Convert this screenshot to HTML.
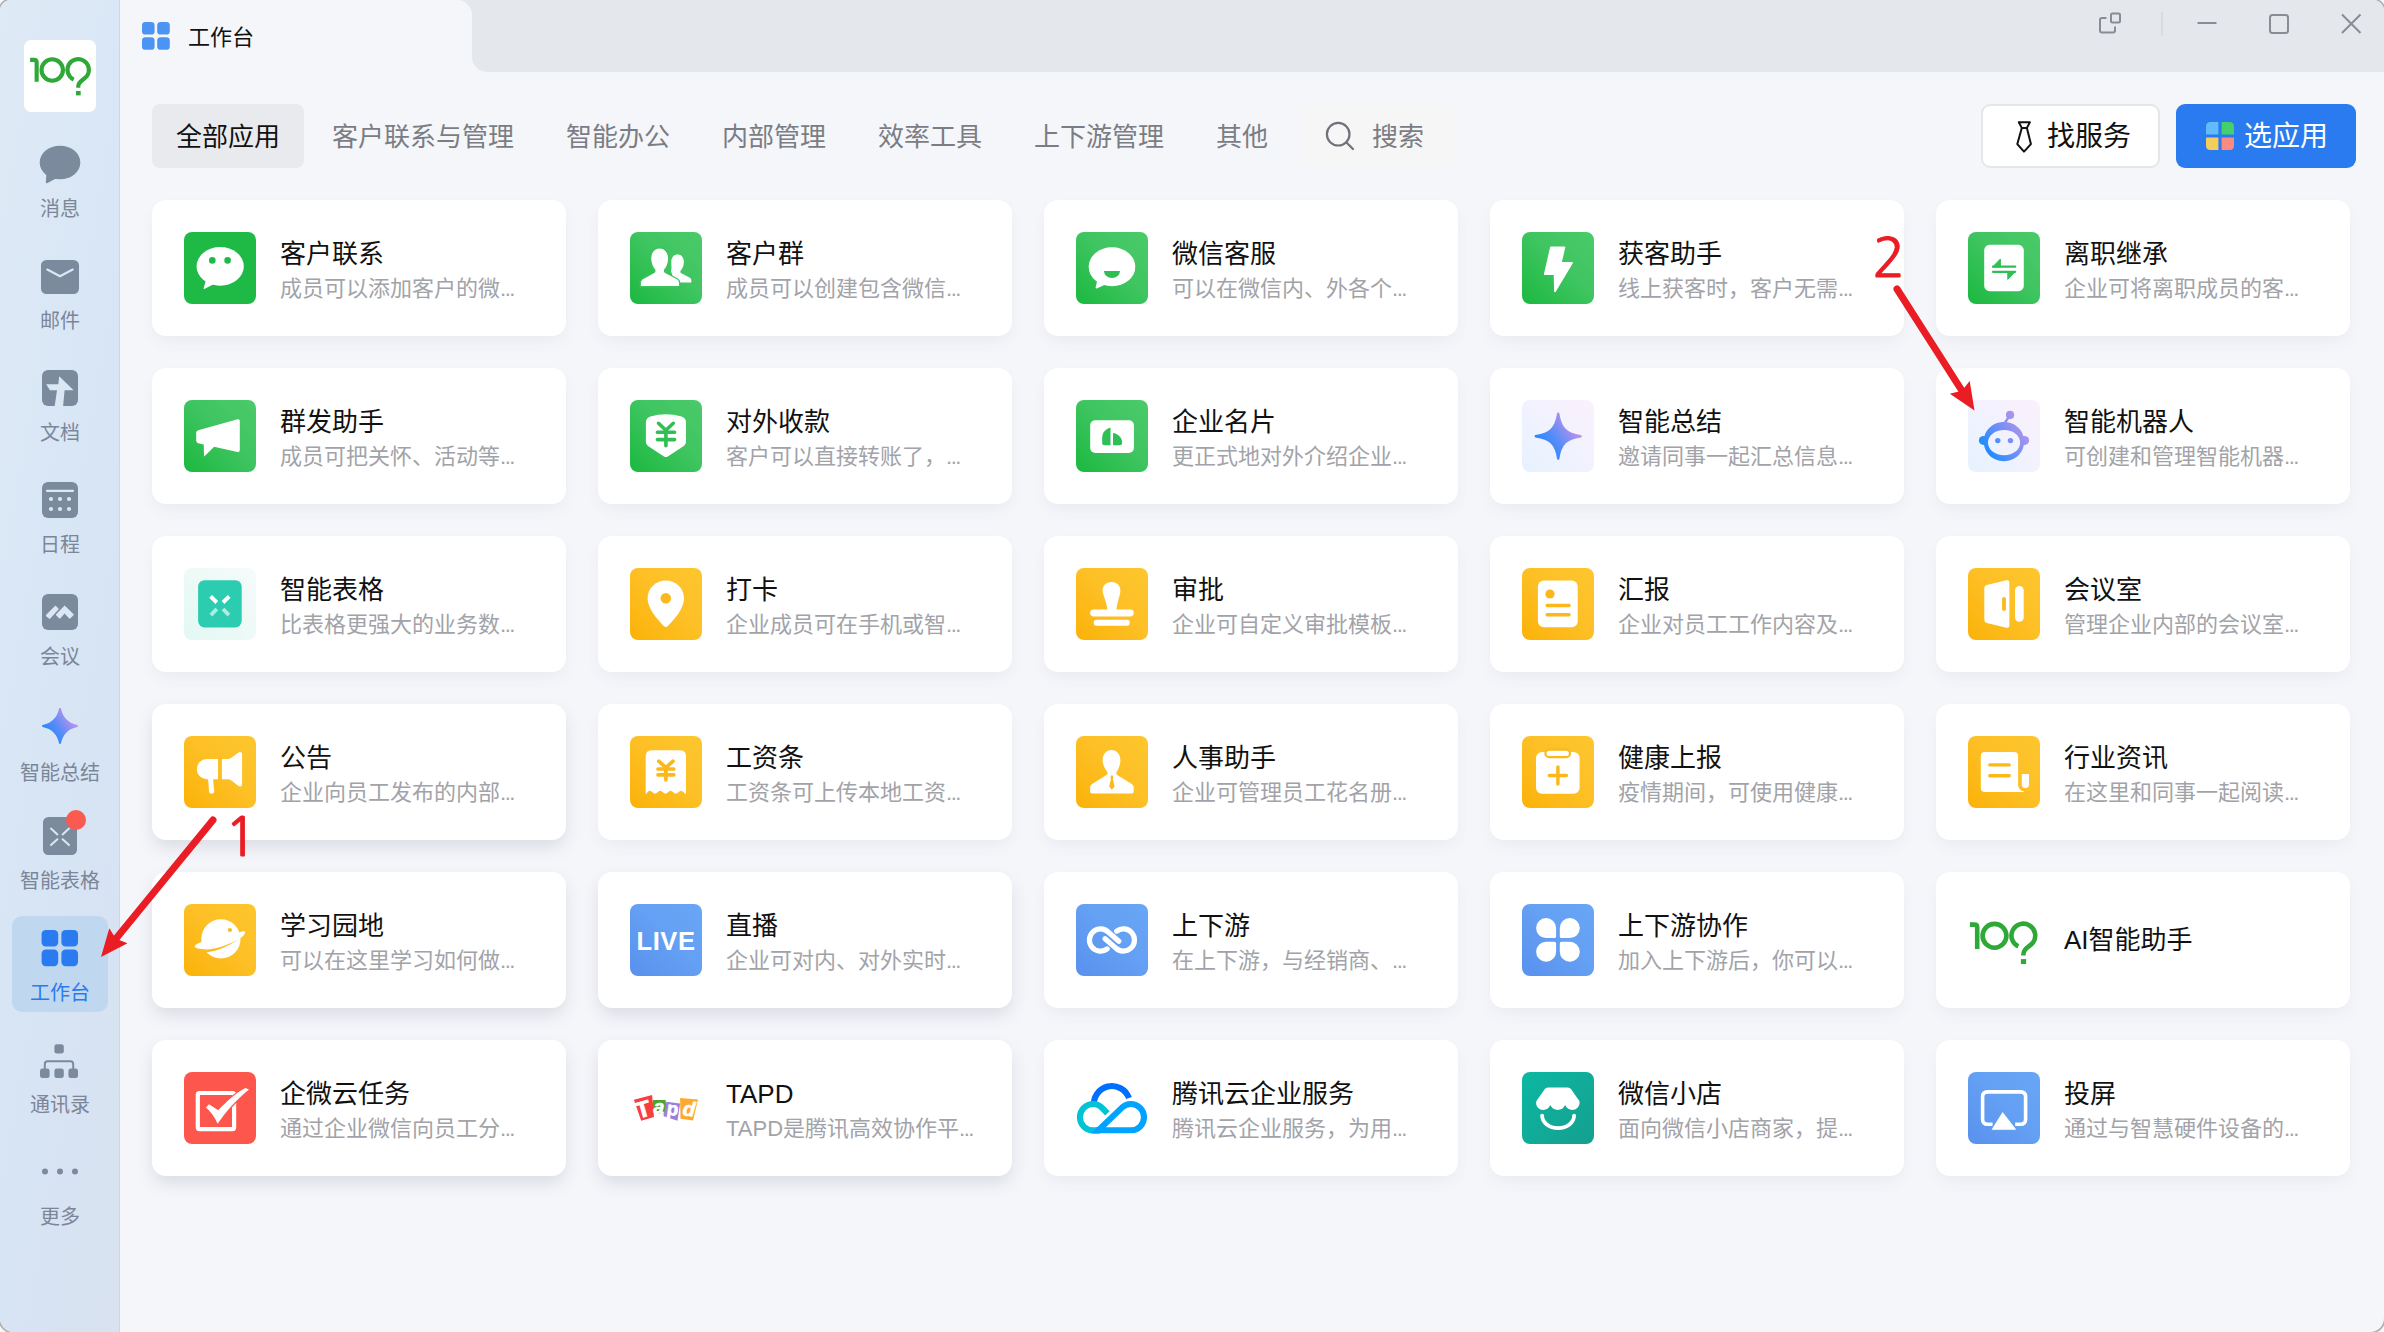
<!DOCTYPE html>
<html lang="zh-CN">
<head>
<meta charset="utf-8">
<title>工作台</title>
<style>
*{box-sizing:border-box;margin:0;padding:0}
html,body{width:2384px;height:1332px;overflow:hidden;background:#f7f7f7;font-family:"Liberation Sans","Noto Sans CJK SC",sans-serif;}
#win{position:absolute;left:0;top:0;width:2384px;height:1332px;border-radius:11px 11px 14px 14px;overflow:hidden;background:#f5f6fa;box-shadow:0 0 0 1.8px #b0b0b0;}
#side{position:absolute;left:0;top:0;width:120px;height:1332px;background:linear-gradient(100deg,#dfeaf6 0%,#d7e5f5 50%,#d8e2f0 100%);border-right:1px solid #cdd6e2;}
#logo{position:absolute;left:24px;top:40px;width:72px;height:72px;border-radius:7px;background:#fff;}
.si{position:absolute;left:0;width:120px;text-align:center;color:#7c8698;font-size:20px;line-height:26px;}
.si svg{position:absolute;left:50%;}
.si span{position:absolute;left:0;width:120px;text-align:center;}
#act{position:absolute;left:12px;top:916px;width:96px;height:96px;border-radius:10px;background:#c0d7f0;}
#tbar0{position:absolute;left:440px;top:0;width:80px;height:40px;background:#e4e7ec;}
#tbar{position:absolute;left:472px;top:0;width:1912px;height:72px;background:#e4e7ec;border-radius:0 0 0 15px;}
#ttab{position:absolute;left:120px;top:0;width:352px;height:72px;background:#f5f6fa;border-radius:0 15px 0 0;}
#ttl{position:absolute;left:188px;top:20px;font-size:22px;line-height:36px;color:#111;}
.tab{position:absolute;top:104px;height:64px;line-height:67px;font-size:26px;color:#7a7d83;padding:0 24px;border-radius:8px;white-space:nowrap;}
.tab.on{background:#e9eaee;color:#111;}
#search{position:absolute;left:1300px;top:105px;width:153px;height:62px;border-radius:8px;background:#f6f6f7;}
#search span{position:absolute;left:72px;top:0;line-height:64px;font-size:26px;color:#7a7d83;}
#btn1{position:absolute;left:1981px;top:104px;width:179px;height:64px;border-radius:9px;background:#fff;border:2px solid #e6e6e6;}
#btn1 span{position:absolute;left:64px;top:0;line-height:62px;font-size:28px;color:#111;}
#btn2{position:absolute;left:2176px;top:104px;width:180px;height:64px;border-radius:9px;background:#2a7bef;}
#btn2 span{position:absolute;left:68px;top:0;line-height:66px;font-size:28px;color:#fff;}
.card{position:absolute;width:414px;height:136px;border-radius:14px;background:#fff;box-shadow:0 7px 16px -3px rgba(70,80,110,.075);}
.card.hv{box-shadow:0 8px 18px -2px rgba(50,60,90,.15);}
.card .ic{position:absolute;left:32px;top:32px;width:72px;height:72px;}
.card .ic svg{display:block;width:72px;height:72px;}
.card .tt{position:absolute;left:128px;top:35px;font-size:26px;line-height:38px;color:#111;white-space:nowrap;}
.card .ds{position:absolute;left:128px;top:72px;font-size:22px;line-height:34px;color:#a2a3a8;white-space:nowrap;}
.card.nod .tt{top:49px;}
.el{letter-spacing:-1.5px;}
#anno{position:absolute;left:0;top:0;width:2384px;height:1332px;pointer-events:none;}
</style>
</head>
<body>
<div id="win">
<div id="side">
<div id="logo"><svg width="72" height="72" viewBox="0 0 72 72" style="display:block"><g transform="translate(4.375 1.37) scale(0.9)"><g fill="none" stroke="#2ea836" stroke-width="4.6"><path d="M1.9 20.6 H6.4 Q9.2 20.6 9.2 23.4 V44.9"/><circle cx="26.5" cy="31.8" r="11.9"/><path d="M50.35 42.4 A11.9 11.9 0 1 1 65.1 38.4 C62 42.6 55.45 44.4 55.45 49.8 V51.6"/></g><rect x="52.9" y="55.1" width="5.2" height="4.9" fill="#2ea836"/></g></svg></div>
<div id="act"></div>
<div class="si" style="top:140px"><svg style="left:0;top:0;margin-left:0;overflow:visible" width="120" height="60" viewBox="0 0 120 60"><ellipse cx="60" cy="22.5" rx="20.3" ry="16.8" fill="#7c8a9e"/><path d="M46.5 33 L45.8 42.6 Q46 43.6 47 43.2 L57 38 Z" fill="#7c8a9e"/></svg><span style="top:56px">消息</span></div>
<div class="si" style="top:252px"><svg style="left:0;top:0;margin-left:0;overflow:visible" width="120" height="60" viewBox="0 0 120 60"><rect x="41" y="8" width="38" height="34" rx="5.5" fill="#7c8a9e"/><path d="M47.3 17.6 L60 24.2 L72.7 17.6" fill="none" stroke="#dbe7f4" stroke-width="2.2" stroke-linecap="round" stroke-linejoin="round"/></svg><span style="top:56px">邮件</span></div>
<div class="si" style="top:364px"><svg style="left:0;top:0;margin-left:0;overflow:visible" width="120" height="60" viewBox="0 0 120 60"><rect x="42" y="6" width="36" height="36" rx="6" fill="#7c8a9e"/><path d="M59.2 12.3 L73.6 26.3 L64.6 26.3 L63.1 42 L54.7 42 L57 26.3 L50 26.3 L46.2 20.2 L58.3 20.2 Z" fill="#dbe7f4"/></svg><span style="top:56px">文档</span></div>
<div class="si" style="top:476px"><svg style="left:0;top:0;margin-left:0;overflow:visible" width="120" height="60" viewBox="0 0 120 60"><rect x="42" y="6" width="36" height="36" rx="6" fill="#7c8a9e"/><rect x="46" y="13.8" width="28" height="2.2" rx="1" fill="#dbe7f4"/><circle cx="51" cy="23" r="2.1" fill="#dbe7f4"/><circle cx="60" cy="23" r="2.1" fill="#dbe7f4"/><circle cx="69" cy="23" r="2.1" fill="#dbe7f4"/><circle cx="51" cy="33" r="2.1" fill="#dbe7f4"/><circle cx="60" cy="33" r="2.1" fill="#dbe7f4"/><circle cx="69" cy="33" r="2.1" fill="#dbe7f4"/></svg><span style="top:56px">日程</span></div>
<div class="si" style="top:588px"><svg style="left:0;top:0;margin-left:0;overflow:visible" width="120" height="60" viewBox="0 0 120 60"><rect x="42" y="6" width="36" height="36" rx="6" fill="#7c8a9e"/><path d="M55.5 17.5 L46.2 26.8 Q45.6 27.6 46.4 28.4 L48.9 30.6 Q49.6 31.2 50.3 30.4 L58.9 21 Z" fill="#dbe7f4"/><path d="M64.6 17.5 L73.4 26.1 Q74 26.9 73.3 27.6 L70.5 30.3 Q69.7 30.9 69 30.2 L64.6 25.5 L60.4 30.2 Q59.8 30.8 59 30.2 L55.7 26.8 Z" fill="#dbe7f4"/></svg><span style="top:56px">会议</span></div>
<div class="si" style="top:704px"><svg style="left:0;top:0;margin-left:0;overflow:visible" width="120" height="60" viewBox="0 0 120 60"><defs><linearGradient id="sg1" x1="0.1" y1="0.8" x2="0.9" y2="0.25"><stop offset="0" stop-color="#1f86ff"/><stop offset="0.45" stop-color="#5a8cf8"/><stop offset="1" stop-color="#c793ee"/></linearGradient></defs><path d="M60 5 C62.04 14.52 67.48 19.96 77 22 C67.48 24.04 62.04 29.48 60 39 C57.96 29.48 52.519999999999996 24.04 43 22 C52.519999999999996 19.96 57.96 14.52 60 5 Z" fill="url(#sg1)" stroke="url(#sg1)" stroke-width="2" stroke-linejoin="round"/></svg><span style="top:56px">智能总结</span></div>
<div class="si" style="top:812px"><svg style="left:0;top:0;margin-left:0;overflow:visible" width="120" height="60" viewBox="0 0 120 60"><rect x="43" y="5" width="34" height="38" rx="5.5" fill="#7c8a9e"/><path d="M51 16.6 L57.4 22.4 M69 16.6 L62.6 22.4 M51 33 L57.4 27.2 M69 33 L62.6 27.2" stroke="#dbe7f4" stroke-width="2" stroke-linecap="round"/><circle cx="76" cy="8" r="10" fill="#fa5b50"/></svg><span style="top:56px">智能表格</span></div>
<div class="si" style="top:924px;color:#2a7bef"><svg style="left:0;top:0;margin-left:0;overflow:visible" width="120" height="60" viewBox="0 0 120 60"><rect x="41.6" y="6" width="16.6" height="16.6" rx="4.2" fill="#2a7bef"/><rect x="41.6" y="25.6" width="16.6" height="16.6" rx="4.2" fill="#2a7bef"/><rect x="61.4" y="6" width="16.6" height="16.6" rx="4.2" fill="#2a7bef"/><rect x="61.4" y="25.6" width="16.6" height="16.6" rx="4.2" fill="#2a7bef"/></svg><span style="top:56px">工作台</span></div>
<div class="si" style="top:1036px"><svg style="left:0;top:0;margin-left:0;overflow:visible" width="120" height="60" viewBox="0 0 120 60"><rect x="54.4" y="8.2" width="9.4" height="9.4" rx="2.4" fill="#7c8a9e"/><rect x="40" y="32.5" width="9.6" height="9.6" rx="2.4" fill="#7c8a9e"/><rect x="54.4" y="32.5" width="9.4" height="9.6" rx="2.4" fill="#7c8a9e"/><rect x="68.4" y="32.5" width="9.6" height="9.6" rx="2.4" fill="#7c8a9e"/><path d="M44.8 33 L44.8 28 Q44.8 25.2 47.6 25.2 L70.4 25.2 Q73.2 25.2 73.2 28 L73.2 33" fill="none" stroke="#7c8a9e" stroke-width="2"/></svg><span style="top:56px">通讯录</span></div>
<div class="si" style="top:1148px"><svg style="left:0;top:0;margin-left:0;overflow:visible" width="120" height="60" viewBox="0 0 120 60"><circle cx="45" cy="23.5" r="3" fill="#7c8a9e"/><circle cx="60" cy="23.5" r="3" fill="#7c8a9e"/><circle cx="75" cy="23.5" r="3" fill="#7c8a9e"/></svg><span style="top:56px">更多</span></div>
</div>
<div id="tbar0"></div>
<div id="tbar"></div>
<div id="ttab"></div>
<svg style="position:absolute;left:142px;top:22px" width="28" height="28" viewBox="0 0 28 28"><rect x="0" y="0" width="12.6" height="12.6" rx="3.4" fill="#4c94f4"/><rect x="0" y="15.2" width="12.6" height="12.6" rx="3.4" fill="#4c94f4"/><rect x="15.2" y="0" width="12.6" height="12.6" rx="3.4" fill="#4c94f4"/><rect x="15.2" y="15.2" width="12.6" height="12.6" rx="3.4" fill="#4c94f4"/></svg>
<div id="ttl">工作台</div>
<svg style="position:absolute;left:2090px;top:0" width="294" height="72" viewBox="2090 0 294 72" fill="none" stroke="#898c92" stroke-width="2"><rect x="2111" y="13.5" width="9" height="9" rx="1.5"/><path d="M2106.5 18 L2102 18 Q2100 18 2100 20 L2100 30.5 Q2100 32.5 2102 32.5 L2113 32.5 Q2115 32.5 2115 30.5 L2115 26.5"/><path d="M2162 12 L2162 35.5" stroke="#d6d7da" stroke-width="1.6"/><path d="M2197.5 23 L2216.5 23"/><rect x="2270" y="15" width="18" height="18" rx="2.5"/><path d="M2342 14.5 L2360.5 33 M2360.5 14.5 L2342 33"/></svg>
<div class="tab on" style="left:152px">全部应用</div>
<div class="tab" style="left:308px">客户联系与管理</div>
<div class="tab" style="left:542px">智能办公</div>
<div class="tab" style="left:698px">内部管理</div>
<div class="tab" style="left:854px">效率工具</div>
<div class="tab" style="left:1010px">上下游管理</div>
<div class="tab" style="left:1192px">其他</div>
<div id="search"><svg style="position:absolute;left:23px;top:14px" width="34" height="34" viewBox="0 0 34 34" fill="none" stroke="#6f7278" stroke-width="2.2" stroke-linecap="round"><circle cx="15.2" cy="15.2" r="11.3"/><path d="M23.5 23.5 L30 30"/></svg><span>搜索</span></div>
<div id="btn1"><svg style="position:absolute;left:32px;top:12.5px" width="18" height="34" viewBox="0 0 18 34" fill="none" stroke="#111" stroke-width="2" stroke-linejoin="round"><path d="M3.8 3.2 L14.9 3.2 L11.9 8.9 L6.8 8.9 Z"/><path d="M6.8 8.9 L2.3 25.1 L9 32.6 L15.9 25.1 L11.9 8.9"/></svg><span>找服务</span></div>
<div id="btn2"><svg style="position:absolute;left:30px;top:18px" width="28" height="28" viewBox="0 0 28 28"><path d="M4.5 0 H12.4 V12.4 H0 V4.5 Q0 0 4.5 0 Z" fill="#62bbfd"/><path d="M15.6 0 H23.5 Q28 0 28 4.5 V12.4 H15.6 Z" fill="#45d06a"/><path d="M0 15.6 H12.4 V28 H4.5 Q0 28 0 23.5 Z" fill="#f5cd5c"/><path d="M15.6 15.6 H28 V23.5 Q28 28 23.5 28 H15.6 Z" fill="#fb8a83"/></svg><span>选应用</span></div>
<div class="card" style="left:152px;top:200px"><div class="ic"><svg viewBox="0 0 72 72"><rect width="72" height="72" rx="8" fill="#1fba46"/><ellipse cx="36.2" cy="34.4" rx="23.6" ry="19.4" fill="#fff"/><path d="M22 48 L19.6 56.4 Q19.8 57.2 20.8 56.8 L31 51.5 Z" fill="#fff"/><circle cx="28.3" cy="28.4" r="3.3" fill="#1fba46"/><circle cx="43.6" cy="28.4" r="3.3" fill="#1fba46"/></svg></div><div class="tt">客户联系</div><div class="ds">成员可以添加客户的微<span class="el">...</span></div></div>
<div class="card" style="left:598px;top:200px"><div class="ic"><svg viewBox="0 0 72 72"><defs><linearGradient id="g1" x1="0" y1="1" x2="1" y2="0"><stop offset="0" stop-color="#1bb83f"/><stop offset="0.55" stop-color="#3fc561"/><stop offset="1" stop-color="#4bca69"/></linearGradient></defs><rect width="72" height="72" rx="8" fill="url(#g1)"/><g transform="translate(0.9 1.1)"><path d="M46.7 21.4 C50.8 21.4 53 24.8 53 29 C53 32.6 51.6 35.6 50 37.2 C49.2 38.2 49.3 39.6 50.4 40.2 L58.6 44.4 C60 45.2 60.4 46.2 60.4 47.4 L60.4 49.4 L44 49.4 L40 38 C41 36 40.4 33 40.4 29 C40.4 24.8 42.6 21.4 46.7 21.4 Z" fill="#fff"/><path d="M28.7 15.3 C34 15.3 37.2 19.8 37.2 25.4 C37.2 30 35.4 34 33.6 36 C32.6 37.2 32.8 39.2 34.2 40 L45.6 46 C47.6 47 48.2 48.6 48.2 50.4 L48.2 53 L10 53 L10 50.4 C10 48.6 10.6 47 12.6 46 L23.4 40 C24.8 39.2 25 37.2 24 36 C22.2 34 20.4 30 20.4 25.4 C20.4 19.8 23.4 15.3 28.7 15.3 Z" fill="#fff" stroke="#3cc35e" stroke-width="2.6" paint-order="stroke"/></g></svg></div><div class="tt">客户群</div><div class="ds">成员可以创建包含微信<span class="el">...</span></div></div>
<div class="card" style="left:1044px;top:200px"><div class="ic"><svg viewBox="0 0 72 72"><defs><linearGradient id="g2" x1="0" y1="1" x2="1" y2="0"><stop offset="0" stop-color="#1bb83f"/><stop offset="0.55" stop-color="#3fc561"/><stop offset="1" stop-color="#4bca69"/></linearGradient></defs><rect width="72" height="72" rx="8" fill="url(#g2)"/><ellipse cx="36" cy="34.8" rx="23.3" ry="19.5" fill="#fff"/><path d="M21.4 47.6 L19.6 55.8 Q19.8 56.8 20.8 56.4 L31.4 51.6 Z" fill="#fff"/><path d="M28 39.1 L44 39.1 A8 7 0 0 1 28 39.1 Z" fill="#2dbf54"/></svg></div><div class="tt">微信客服</div><div class="ds">可以在微信内、外各个<span class="el">...</span></div></div>
<div class="card" style="left:1490px;top:200px"><div class="ic"><svg viewBox="0 0 72 72"><defs><linearGradient id="g3" x1="0" y1="1" x2="1" y2="0"><stop offset="0" stop-color="#1bb83f"/><stop offset="0.55" stop-color="#3fc561"/><stop offset="1" stop-color="#4bca69"/></linearGradient></defs><rect width="72" height="72" rx="8" fill="url(#g3)"/><path d="M29 15.3 L42.4 15.3 L38.8 30.8 L50 30.8 L33 59.2 L32.6 42.2 L22.8 42.2 Z" fill="#fff" stroke="#fff" stroke-width="1.8" stroke-linejoin="round"/></svg></div><div class="tt">获客助手</div><div class="ds">线上获客时，客户无需<span class="el">...</span></div></div>
<div class="card" style="left:1936px;top:200px"><div class="ic"><svg viewBox="0 0 72 72"><defs><linearGradient id="g4" x1="0" y1="1" x2="1" y2="0"><stop offset="0" stop-color="#1bb83f"/><stop offset="0.55" stop-color="#3fc561"/><stop offset="1" stop-color="#4bca69"/></linearGradient></defs><rect width="72" height="72" rx="8" fill="url(#g4)"/><rect x="16.2" y="12.8" width="39.6" height="46.4" rx="5.5" fill="#fff"/><path d="M25 34.7 L47.2 34.7 M25 39.8 L47.2 39.8" stroke="#2fbf55" stroke-width="2.2" stroke-linecap="round"/><path d="M24.6 35 L32.4 27 L32.4 35 Z M47.6 39.5 L39.8 47.4 L39.8 39.5 Z" fill="#2fbf55" stroke="#2fbf55" stroke-width="1" stroke-linejoin="round"/></svg></div><div class="tt">离职继承</div><div class="ds">企业可将离职成员的客<span class="el">...</span></div></div>
<div class="card" style="left:152px;top:368px"><div class="ic"><svg viewBox="0 0 72 72"><defs><linearGradient id="g5" x1="0" y1="1" x2="1" y2="0"><stop offset="0" stop-color="#1bb83f"/><stop offset="0.55" stop-color="#3fc561"/><stop offset="1" stop-color="#4bca69"/></linearGradient></defs><rect width="72" height="72" rx="8" fill="url(#g5)"/><path d="M14.2 30.2 L53.6 19.2 Q55.8 18.8 55.8 21 L55.8 50 Q55.8 52.4 53.6 52 L14.2 43.2 Q12.2 42.6 12.2 40.6 L12.2 32.6 Q12.2 30.8 14.2 30.2 Z" fill="#fff"/><path d="M19.7 42.6 L20 56 Q20.2 56.7 20.8 56.1 L30.4 46.6 Z" fill="#fff"/></svg></div><div class="tt">群发助手</div><div class="ds">成员可把关怀、活动等<span class="el">...</span></div></div>
<div class="card" style="left:598px;top:368px"><div class="ic"><svg viewBox="0 0 72 72"><defs><linearGradient id="g6" x1="0" y1="1" x2="1" y2="0"><stop offset="0" stop-color="#1bb83f"/><stop offset="0.55" stop-color="#3fc561"/><stop offset="1" stop-color="#4bca69"/></linearGradient></defs><rect width="72" height="72" rx="8" fill="url(#g6)"/><path d="M20.4 16.4 Q35.9 12 51.6 16.4 Q56 17.8 56 22.4 L56 42 Q56 44.6 53.8 46 L37.8 56.4 Q35.9 57.6 34 56.4 L18 46 Q15.9 44.6 15.9 42 L15.9 22.4 Q15.9 17.8 20.4 16.4 Z" fill="#fff"/><path d="M28.5 23.3 L35.9 30.2 L43.3 23.3 M35.9 30.2 L35.9 45.8 M27.4 32.2 L44.6 32.2 M27.4 39.6 L44.6 39.6" fill="none" stroke="#2fbf55" stroke-width="3.6" stroke-linecap="round" stroke-linejoin="round"/></svg></div><div class="tt">对外收款</div><div class="ds">客户可以直接转账了，<span class="el">...</span></div></div>
<div class="card" style="left:1044px;top:368px"><div class="ic"><svg viewBox="0 0 72 72"><defs><linearGradient id="g7" x1="0" y1="1" x2="1" y2="0"><stop offset="0" stop-color="#1bb83f"/><stop offset="0.55" stop-color="#3fc561"/><stop offset="1" stop-color="#4bca69"/></linearGradient></defs><rect width="72" height="72" rx="8" fill="url(#g7)"/><rect x="14.2" y="20.2" width="43.7" height="32.8" rx="5" fill="#fff"/><path d="M26.2 43.3 L26.2 37 Q26.6 30.6 33.4 27.7 Q34.5 27.4 34.5 28.6 L34.5 45.3 L28.2 45.3 Q26.2 45.3 26.2 43.3 Z" fill="#2fbf55"/><path d="M37 33.6 Q37 32.6 38 33 Q45.6 35.6 46 41.6 L46 43.3 Q46 45.3 44 45.3 L37 45.3 Z" fill="#2fbf55"/></svg></div><div class="tt">企业名片</div><div class="ds">更正式地对外介绍企业<span class="el">...</span></div></div>
<div class="card" style="left:1490px;top:368px"><div class="ic"><svg viewBox="0 0 72 72"><defs><linearGradient id="g8" x1="0" y1="1" x2="1" y2="0"><stop offset="0" stop-color="#e6f2ff"/><stop offset="0.55" stop-color="#f2f2fe"/><stop offset="1" stop-color="#fbf1fd"/></linearGradient></defs><rect width="72" height="72" rx="8" fill="url(#g8)"/><defs><linearGradient id="zs" x1="0.1" y1="0.8" x2="0.9" y2="0.25"><stop offset="0" stop-color="#1f86ff"/><stop offset="0.45" stop-color="#5a8cf8"/><stop offset="1" stop-color="#c793ee"/></linearGradient></defs><path d="M36.2 13.800000000000004 C38.3504 28.315200000000004 44.0848 34.049600000000005 58.6 36.2 C44.0848 38.3504 38.3504 44.0848 36.2 58.6 C34.049600000000005 44.0848 28.315200000000004 38.3504 13.800000000000004 36.2 C28.315200000000004 34.049600000000005 34.049600000000005 28.315200000000004 36.2 13.800000000000004 Z" fill="url(#zs)" stroke="url(#zs)" stroke-width="2.4" stroke-linejoin="round"/></svg></div><div class="tt">智能总结</div><div class="ds">邀请同事一起汇总信息<span class="el">...</span></div></div>
<div class="card" style="left:1936px;top:368px"><div class="ic"><svg viewBox="0 0 72 72"><defs><linearGradient id="g9" x1="0" y1="1" x2="1" y2="0"><stop offset="0" stop-color="#e6f2ff"/><stop offset="0.55" stop-color="#f2f2fe"/><stop offset="1" stop-color="#fbf1fd"/></linearGradient></defs><rect width="72" height="72" rx="8" fill="url(#g9)"/><defs><linearGradient id="rb" gradientUnits="userSpaceOnUse" x1="14" y1="52" x2="58" y2="22"><stop offset="0" stop-color="#0f8dff"/><stop offset="0.5" stop-color="#6e8ff7"/><stop offset="1" stop-color="#bf95e8"/></linearGradient></defs><g fill="url(#rb)"><path fill-rule="evenodd" d="M36 22.1 C47.6 22.1 56.1 30.6 56.1 41.6 C56.1 52.6 47.6 61.2 36 61.2 C24.4 61.2 15.8 52.6 15.8 41.6 C15.8 30.6 24.4 22.1 36 22.1 Z M36.1 29.9 C27 29.9 20 35.4 20 42.5 C20 49.6 27 55.2 36.1 55.2 C45.2 55.2 52.2 49.6 52.2 42.5 C52.2 35.4 45.2 29.9 36.1 29.9 Z"/><circle cx="15.4" cy="40.4" r="4.5"/><circle cx="56.6" cy="40.4" r="4.5"/><circle cx="29.8" cy="40.6" r="2.7"/><circle cx="42.5" cy="40.6" r="2.7"/><circle cx="42.1" cy="14.9" r="4.1"/><path d="M34.8 23.4 L37.4 24 L42.4 17 L40.4 15.4 Z"/></g></svg></div><div class="tt">智能机器人</div><div class="ds">可创建和管理智能机器<span class="el">...</span></div></div>
<div class="card" style="left:152px;top:536px"><div class="ic"><svg viewBox="0 0 72 72"><defs><linearGradient id="g10" x1="0" y1="1" x2="1" y2="0"><stop offset="0" stop-color="#e2f8f3"/><stop offset="0.55" stop-color="#eefaf7"/><stop offset="1" stop-color="#f6fbfb"/></linearGradient></defs><rect width="72" height="72" rx="8" fill="url(#g10)"/><rect x="14.1" y="12.2" width="43.6" height="47.2" rx="6.4" fill="#2bccb0"/><path d="M26.6 28.3 L32.8 34.5 M45.2 28.3 L39 34.5" stroke="#fff" stroke-width="3.9" stroke-linecap="butt"/><path d="M26.9 47.2 L32.8 41 M44.9 47.2 L39 41" stroke="#fff" stroke-opacity="0.62" stroke-width="3.9" stroke-linecap="butt"/></svg></div><div class="tt">智能表格</div><div class="ds">比表格更强大的业务数<span class="el">...</span></div></div>
<div class="card" style="left:598px;top:536px"><div class="ic"><svg viewBox="0 0 72 72"><defs><linearGradient id="g11" x1="0" y1="1" x2="1" y2="0"><stop offset="0" stop-color="#fbb209"/><stop offset="0.55" stop-color="#fdc026"/><stop offset="1" stop-color="#fec62e"/></linearGradient></defs><rect width="72" height="72" rx="8" fill="url(#g11)"/><path d="M35.8 12.6 C46 12.6 54 20.4 54 30.4 C54 40 45 50.6 37.6 58.2 Q35.8 59.8 34 58.2 C26.6 50.6 17.6 40 17.6 30.4 C17.6 20.4 25.6 12.6 35.8 12.6 Z" fill="#fff"/><circle cx="35.8" cy="30.2" r="5.2" fill="#fcb81a"/></svg></div><div class="tt">打卡</div><div class="ds">企业成员可在手机或智<span class="el">...</span></div></div>
<div class="card" style="left:1044px;top:536px"><div class="ic"><svg viewBox="0 0 72 72"><defs><linearGradient id="g12" x1="0" y1="1" x2="1" y2="0"><stop offset="0" stop-color="#fbb209"/><stop offset="0.55" stop-color="#fdc026"/><stop offset="1" stop-color="#fec62e"/></linearGradient></defs><rect width="72" height="72" rx="8" fill="url(#g12)"/><path d="M35.5 14.1 C41 14.1 44.6 18 44.4 23 C44.2 27.4 41.4 33 40.4 42 L31.5 42 C30.4 33 27 27.4 26.6 23 C26.4 18 30 14.1 35.5 14.1 Z" fill="#fff"/><rect x="14.1" y="41.5" width="43.6" height="6.9" rx="3.4" fill="#fff"/><rect x="17.7" y="51.8" width="36" height="5.9" rx="2.6" fill="#fff"/></svg></div><div class="tt">审批</div><div class="ds">企业可自定义审批模板<span class="el">...</span></div></div>
<div class="card" style="left:1490px;top:536px"><div class="ic"><svg viewBox="0 0 72 72"><defs><linearGradient id="g13" x1="0" y1="1" x2="1" y2="0"><stop offset="0" stop-color="#fbb209"/><stop offset="0.55" stop-color="#fdc026"/><stop offset="1" stop-color="#fec62e"/></linearGradient></defs><rect width="72" height="72" rx="8" fill="url(#g13)"/><rect x="15.9" y="12.5" width="39.8" height="46.7" rx="6" fill="#fff"/><circle cx="28" cy="26" r="4.6" fill="#fcb81a"/><path d="M25.2 37.5 L47 37.5 M25.2 46.7 L47 46.7" stroke="#fcb81a" stroke-width="3.5" stroke-linecap="round"/></svg></div><div class="tt">汇报</div><div class="ds">企业对员工工作内容及<span class="el">...</span></div></div>
<div class="card" style="left:1936px;top:536px"><div class="ic"><svg viewBox="0 0 72 72"><defs><linearGradient id="g14" x1="0" y1="1" x2="1" y2="0"><stop offset="0" stop-color="#fbb209"/><stop offset="0.55" stop-color="#fdc026"/><stop offset="1" stop-color="#fec62e"/></linearGradient></defs><rect width="72" height="72" rx="8" fill="url(#g14)"/><path d="M18.8 17 L38.4 12.3 Q41.4 11.6 41.4 14.6 L41.4 57.4 Q41.4 60.4 38.4 59.7 L18.8 55 Q16.3 54.4 16.3 51.8 L16.3 20.2 Q16.3 17.6 18.8 17 Z" fill="#fff"/><rect x="34.1" y="29" width="3.8" height="14" rx="1.9" fill="#fcb81a"/><rect x="47" y="18.1" width="8.7" height="35.6" rx="4.3" fill="#fff"/></svg></div><div class="tt">会议室</div><div class="ds">管理企业内部的会议室<span class="el">...</span></div></div>
<div class="card hv" style="left:152px;top:704px"><div class="ic"><svg viewBox="0 0 72 72"><defs><linearGradient id="g15" x1="0" y1="1" x2="1" y2="0"><stop offset="0" stop-color="#fbb209"/><stop offset="0.55" stop-color="#fdc026"/><stop offset="1" stop-color="#fec62e"/></linearGradient></defs><rect width="72" height="72" rx="8" fill="url(#g15)"/><path d="M22.8 23.1 L34 23.1 L34 43.2 L22.8 43.2 A10.05 10.05 0 0 1 22.8 23.1 Z" fill="#fff"/><path d="M24 42.6 L29 42.6 L30.2 55 Q30.2 57.7 27.6 57.7 Q25.2 57.7 25 55 Z" fill="#fff"/><path d="M37.9 23.1 L43.5 23.1 Q45.6 23.1 47.4 21.8 L54.2 16.8 Q58.1 14.6 58.1 18.6 L58.1 48 Q58.1 52 54.2 49.8 L47.4 44.6 Q45.6 43.2 43.5 43.2 L37.9 43.2 Z" fill="#fff"/></svg></div><div class="tt">公告</div><div class="ds">企业向员工发布的内部<span class="el">...</span></div></div>
<div class="card" style="left:598px;top:704px"><div class="ic"><svg viewBox="0 0 72 72"><defs><linearGradient id="g16" x1="0" y1="1" x2="1" y2="0"><stop offset="0" stop-color="#fbb209"/><stop offset="0.55" stop-color="#fdc026"/><stop offset="1" stop-color="#fec62e"/></linearGradient></defs><rect width="72" height="72" rx="8" fill="url(#g16)"/><path d="M21.7 14.2 L50 14.2 Q56 14.2 56 20.2 L56 58.2 L52.6 55.4 Q51 54.2 49.4 55.4 L47.4 57 Q45.8 58.2 44.2 57 L42.2 55.4 Q40.6 54.2 39 55.4 L37 57 Q35.4 58.2 33.8 57 L31.8 55.4 Q30.2 54.2 28.6 55.4 L26.6 57 Q25 58.2 23.4 57 L21.4 55.4 Q19.8 54.2 18.2 55.4 L15.7 58.2 L15.7 20.2 Q15.7 14.2 21.7 14.2 Z" fill="#fff"/><path d="M28.8 25.2 L35.9 31.6 L43 25.2 M35.9 31.6 L35.9 43.8 M28 33 L43.8 33 M28 38.8 L43.8 38.8" fill="none" stroke="#fcb81a" stroke-width="3.7" stroke-linecap="round" stroke-linejoin="round"/></svg></div><div class="tt">工资条</div><div class="ds">工资条可上传本地工资<span class="el">...</span></div></div>
<div class="card" style="left:1044px;top:704px"><div class="ic"><svg viewBox="0 0 72 72"><defs><linearGradient id="g17" x1="0" y1="1" x2="1" y2="0"><stop offset="0" stop-color="#fbb209"/><stop offset="0.55" stop-color="#fdc026"/><stop offset="1" stop-color="#fec62e"/></linearGradient></defs><rect width="72" height="72" rx="8" fill="url(#g17)"/><path d="M35.5 14.1 C40.8 14.1 44.4 18.6 44.4 24.4 C44.4 29 42.4 33 40.8 35.6 C40 37 40.2 38.4 41.6 39.2 L55 47.6 C57 48.8 57.7 50 57.7 52 L57.7 55.6 Q57.7 57.6 55.7 57.6 L16.1 57.6 Q14.1 57.6 14.1 55.6 L14.1 52 C14.1 50 14.8 48.8 16.8 47.6 L30.2 39.2 C31.6 38.4 31.8 37 31 35.6 C29.4 33 26.6 29 26.6 24.4 C26.6 18.6 30.2 14.1 35.5 14.1 Z" fill="#fff"/><path d="M35.9 38.8 L37.4 41 L36.8 43 L38.6 50.4 L35.9 53.7 L33.2 50.4 L35 43 L34.4 41 Z" fill="#fcb81a"/></svg></div><div class="tt">人事助手</div><div class="ds">企业可管理员工花名册<span class="el">...</span></div></div>
<div class="card" style="left:1490px;top:704px"><div class="ic"><svg viewBox="0 0 72 72"><defs><linearGradient id="g18" x1="0" y1="1" x2="1" y2="0"><stop offset="0" stop-color="#fbb209"/><stop offset="0.55" stop-color="#fdc026"/><stop offset="1" stop-color="#fec62e"/></linearGradient></defs><rect width="72" height="72" rx="8" fill="url(#g18)"/><rect x="14" y="15.9" width="43.6" height="41.8" rx="6" fill="#fff"/><rect x="23.4" y="13.6" width="24.6" height="7.6" rx="3.8" fill="#fff" stroke="#fcb81a" stroke-width="2.2"/><path d="M27.4 39.4 L44.4 39.4 M35.9 30.9 L35.9 47.9" stroke="#fcb81a" stroke-width="3.5" stroke-linecap="round"/></svg></div><div class="tt">健康上报</div><div class="ds">疫情期间，可使用健康<span class="el">...</span></div></div>
<div class="card" style="left:1936px;top:704px"><div class="ic"><svg viewBox="0 0 72 72"><defs><linearGradient id="g19" x1="0" y1="1" x2="1" y2="0"><stop offset="0" stop-color="#fbb209"/><stop offset="0.55" stop-color="#fdc026"/><stop offset="1" stop-color="#fec62e"/></linearGradient></defs><rect width="72" height="72" rx="8" fill="url(#g19)"/><path d="M16.8 15.9 H46.1 Q50.1 15.9 50.1 19.9 V48.6 Q50.3 54.6 56.2 55.5 L55.6 56 H16.8 Q12.8 56 12.8 52 V19.9 Q12.8 15.9 16.8 15.9 Z" fill="#fff"/><path d="M53.8 37.9 H61 V48.5 Q61 52.1 57.4 52.1 Q53.8 52.1 53.8 48.5 Z" fill="#fff"/><path d="M21.8 28.9 L41.2 28.9 M21.8 39.7 L41.2 39.7" stroke="#fcb81a" stroke-width="3.4" stroke-linecap="round"/></svg></div><div class="tt">行业资讯</div><div class="ds">在这里和同事一起阅读<span class="el">...</span></div></div>
<div class="card hv" style="left:152px;top:872px"><div class="ic"><svg viewBox="0 0 72 72"><defs><linearGradient id="g20" x1="0" y1="1" x2="1" y2="0"><stop offset="0" stop-color="#fbb209"/><stop offset="0.55" stop-color="#fdc026"/><stop offset="1" stop-color="#fec62e"/></linearGradient></defs><rect width="72" height="72" rx="8" fill="url(#g20)"/><circle cx="36.9" cy="34.9" r="19.6" fill="#fff"/><path d="M18.4 37.6 C13.4 39.4 10.2 41.4 10.8 42.8 C12 45.8 24 45.7 31.6 44.2 C40 42.4 50 37.8 55.4 34.9 C58.8 32.6 61.8 29.6 61.1 28 C60.6 26.8 58.4 27.4 55.4 28.6 L36 34 Z" fill="#fff"/><path d="M14.6 37.6 L17 39.4 L18.6 43 L14 42 Z" fill="#fcba1c" opacity="0"/><path d="M15.4 45.3 C21 45.8 26 45.4 31.6 44.2 C40 42.4 50 37.8 55.4 34.9 C52 37.2 49 38.8 44.9 41 C42 42.6 37 45 31.6 46.5 C30 47 27 47.6 23.1 48.2 L18 48.4 Z" fill="#fcba1c"/><circle cx="45.9" cy="26" r="2.1" fill="#fcba1c"/></svg></div><div class="tt">学习园地</div><div class="ds">可以在这里学习如何做<span class="el">...</span></div></div>
<div class="card hv" style="left:598px;top:872px"><div class="ic"><svg viewBox="0 0 72 72"><defs><linearGradient id="g21" x1="0" y1="1" x2="1" y2="0"><stop offset="0" stop-color="#5991ee"/><stop offset="0.55" stop-color="#64a0f3"/><stop offset="1" stop-color="#6aa6f6"/></linearGradient></defs><rect width="72" height="72" rx="8" fill="url(#g21)"/><text x="36" y="45.6" text-anchor="middle" font-family="Liberation Sans, sans-serif" font-weight="bold" font-size="25.5" letter-spacing="0.6" fill="#fff">LIVE</text></svg></div><div class="tt">直播</div><div class="ds">企业可对内、对外实时<span class="el">...</span></div></div>
<div class="card" style="left:1044px;top:872px"><div class="ic"><svg viewBox="0 0 72 72"><defs><linearGradient id="g22" x1="0" y1="1" x2="1" y2="0"><stop offset="0" stop-color="#5991ee"/><stop offset="0.55" stop-color="#64a0f3"/><stop offset="1" stop-color="#6aa6f6"/></linearGradient></defs><rect width="72" height="72" rx="8" fill="url(#g22)"/><g fill="none" stroke="#fff" stroke-width="5.2" stroke-linecap="round"><path d="M42.8 37.2 L32.35 28.15 A11.1 11.1 0 1 0 31.2 44.9"/><path d="M29.1 34.8 L39.55 43.85 A11.1 11.1 0 1 0 40.7 27.1"/></g></svg></div><div class="tt">上下游</div><div class="ds">在上下游，与经销商、<span class="el">...</span></div></div>
<div class="card" style="left:1490px;top:872px"><div class="ic"><svg viewBox="0 0 72 72"><defs><linearGradient id="g23" x1="0" y1="1" x2="1" y2="0"><stop offset="0" stop-color="#5991ee"/><stop offset="0.55" stop-color="#64a0f3"/><stop offset="1" stop-color="#6aa6f6"/></linearGradient></defs><rect width="72" height="72" rx="8" fill="url(#g23)"/><path d="M24.1 14.1 h0 a10 10 0 0 1 10 10 v8.4 a1.6 1.6 0 0 1 -1.6 1.6 h-8.399999999999999 a10 10 0 0 1 -10 -10 v-0 a10 10 0 0 1 10 -10 Z" fill="#fff"/><path d="M47.8 14.1 h0 a10 10 0 0 1 10 10 v0 a10 10 0 0 1 -10 10 h-8.4 a1.6 1.6 0 0 1 -1.6 -1.6 v-8.399999999999999 a10 10 0 0 1 10 -10 Z" fill="#fff"/><path d="M24.1 37.8 h8.4 a1.6 1.6 0 0 1 1.6 1.6 v8.399999999999999 a10 10 0 0 1 -10 10 h-0 a10 10 0 0 1 -10 -10 v-0 a10 10 0 0 1 10 -10 Z" fill="#fff"/><path d="M39.4 37.8 h8.399999999999999 a10 10 0 0 1 10 10 v0 a10 10 0 0 1 -10 10 h-0 a10 10 0 0 1 -10 -10 v-8.4 a1.6 1.6 0 0 1 1.6 -1.6 Z" fill="#fff"/></svg></div><div class="tt">上下游协作</div><div class="ds">加入上下游后，你可以<span class="el">...</span></div></div>
<div class="card nod" style="left:1936px;top:872px"><div class="ic"><svg viewBox="0 0 72 72"><g fill="none" stroke="#2ea836" stroke-width="4.6"><path d="M1.9 20.6 H6.4 Q9.2 20.6 9.2 23.4 V44.9"/><circle cx="26.5" cy="31.8" r="11.9"/><path d="M50.35 42.4 A11.9 11.9 0 1 1 65.1 38.4 C62 42.6 55.45 44.4 55.45 49.8 V51.6"/></g><rect x="52.9" y="55.1" width="5.2" height="4.9" fill="#2ea836"/></svg></div><div class="tt">AI智能助手</div></div>
<div class="card hv" style="left:152px;top:1040px"><div class="ic"><svg viewBox="0 0 72 72"><rect width="72" height="72" rx="8" fill="#fd564c"/><rect x="13.8" y="21" width="36.3" height="36.1" rx="1.6" fill="none" stroke="#fff" stroke-width="4.2"/><path d="M21.9 35.6 L25 32.3 L34.3 38.3 C42 30 52 21 61.4 16.1 L65 17.4 C53 27 42 39 33.6 51.8 C30.6 45 26.6 39.6 21.9 35.6 Z" fill="#fff" stroke="#fd564c" stroke-width="2.6" paint-order="stroke"/></svg></div><div class="tt">企微云任务</div><div class="ds">通过企业微信向员工分<span class="el">...</span></div></div>
<div class="card hv" style="left:598px;top:1040px"><div class="ic"><svg viewBox="0 0 72 72" font-family="Liberation Sans, sans-serif" font-weight="bold" fill="#fff" text-anchor="middle"><path d="M20.4 39.6 L23.1 28 L35.6 28 L36.9 42.9 Z" fill="#4aa52e"/><path d="M33.6 44.2 L36.3 29.7 L50.1 31.6 L47.5 48.8 Z" fill="#9b80e0"/><path d="M3.9 27.7 L22.1 23.1 L24 44.9 L11.2 48.8 Z" fill="#f93e3e"/><path d="M50.1 26 L68 27.4 L63 48.5 L50.5 46.8 Z" fill="#fea92e"/><g stroke="#fff" stroke-width="0.7"><text transform="translate(15.2 44.6) rotate(-16) scale(1.08 1)" font-size="22.5">T</text><text transform="translate(28.6 41.4) rotate(4)" font-style="italic" font-size="19">a</text><text transform="translate(41.8 43) rotate(8)" font-size="18.5">p</text><text transform="translate(58.4 44) rotate(6)" font-style="italic" font-size="20">d</text></g></svg></div><div class="tt">TAPD</div><div class="ds">TAPD是腾讯高效协作平<span class="el">...</span></div></div>
<div class="card" style="left:1044px;top:1040px"><div class="ic"><svg viewBox="0 0 72 72" fill="none" stroke-width="6.1"><path d="M18 34.6 A18.1 18.1 0 0 1 53 26.1" stroke="#006eff"/><path d="M31.4 41.4 L26.6 36.4 Q22.4 32 17.1 32 A13.2 13.2 0 0 0 17.1 58.4 L24 58.4" stroke="#00c4d6"/><defs><clipPath id="tc"><rect x="0" y="0" width="72" height="61.45"/></clipPath></defs><g clip-path="url(#tc)"><path d="M20 58.4 L54.8 58.4 A13.2 13.2 0 0 0 54.8 32 Q50 32 46 35.6 L17.4 63" stroke="#00a3ff" stroke-linejoin="bevel"/></g></svg></div><div class="tt">腾讯云企业服务</div><div class="ds">腾讯云企业服务，为用<span class="el">...</span></div></div>
<div class="card" style="left:1490px;top:1040px"><div class="ic"><svg viewBox="0 0 72 72"><defs><linearGradient id="xd" x1="0" y1="0" x2="1" y2="1"><stop offset="0" stop-color="#0cb8a2"/><stop offset="1" stop-color="#159f8f"/></linearGradient></defs><rect width="72" height="72" rx="8" fill="url(#xd)"/><path d="M26.4 15.5 L45.4 15.5 Q48.6 15.5 50 18.4 L57.4 29 C58.6 33.6 55 37.9 50.4 37.9 C47.4 37.9 44.4 36.2 43.2 33 C42 36.2 39 37.9 35.8 37.9 C32.6 37.9 29.6 36.2 28.3 33 C27.2 36.2 24.2 37.9 21.2 37.9 C16.6 37.9 13 33.6 14.4 29 L21.8 18.4 Q23.2 15.5 26.4 15.5 Z" fill="#fff"/><path d="M20.1 43.6 A16 12.5 0 0 0 52.1 43.6" fill="none" stroke="#fff" stroke-width="3.8" stroke-linecap="round"/></svg></div><div class="tt">微信小店</div><div class="ds">面向微信小店商家，提<span class="el">...</span></div></div>
<div class="card" style="left:1936px;top:1040px"><div class="ic"><svg viewBox="0 0 72 72"><defs><linearGradient id="g24" x1="0" y1="1" x2="1" y2="0"><stop offset="0" stop-color="#5991ee"/><stop offset="0.55" stop-color="#64a0f3"/><stop offset="1" stop-color="#6aa6f6"/></linearGradient></defs><rect width="72" height="72" rx="8" fill="url(#g24)"/><path d="M24.6 52.3 L19.6 52.3 Q14.6 52.3 14.6 47.3 L14.6 24.9 Q14.6 19.9 19.6 19.9 L52.6 19.9 Q57.6 19.9 57.6 24.9 L57.6 47.3 Q57.6 52.3 52.6 52.3 L47.2 52.3" fill="none" stroke="#fff" stroke-width="3.6" stroke-linecap="butt"/><path d="M34.6 39.9 L47.8 57 Q48.2 57.7 47.4 57.7 L24.4 57.7 Q23.6 57.7 24 57 Z" fill="#fff" stroke="#639ff3" stroke-width="2.4" paint-order="stroke" stroke-linejoin="round"/></svg></div><div class="tt">投屏</div><div class="ds">通过与智慧硬件设备的<span class="el">...</span></div></div>
<svg id="anno" viewBox="0 0 2384 1332"><path d="M213.0 820.0 L115.9 938.8" stroke="#ea1c24" stroke-width="7" stroke-linecap="round"/><path d="M101.0 957.0 L109.3 928.2 L115.9 938.8 L127.5 943.2 Z" fill="#ea1c24"/><path d="M1897.0 289.0 L1961.9 390.7" stroke="#ea1c24" stroke-width="7" stroke-linecap="round"/><path d="M1974.5 410.5 L1949.8 393.7 L1961.9 390.7 L1969.7 381.0 Z" fill="#ea1c24"/><text x="224.5" y="855.5" font-family="NanumGothic, sans-serif" font-size="54" stroke="#ea1c24" stroke-width="0.9" fill="#ea1c24">1</text><text x="1872.5" y="276.5" font-family="NanumGothic, sans-serif" font-size="54" stroke="#ea1c24" stroke-width="0.9" fill="#ea1c24">2</text></svg>
</div>
</body>
</html>
